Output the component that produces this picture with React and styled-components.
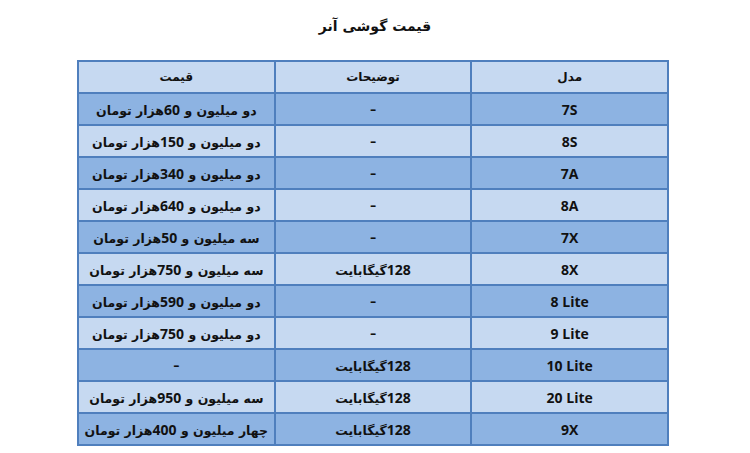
import React from "react";
import styled, { createGlobalStyle } from "styled-components";

const GlobalStyle = createGlobalStyle`
  html, body {
    margin: 0;
    padding: 0;
    background: #ffffff;
  }
  body {
    font-family: "DejaVu Sans", sans-serif;
  }
`;

const Page = styled.div`
  width: 750px;
  height: 453px;
  display: flex;
  flex-direction: column;
  align-items: center;
  direction: rtl;
`;

const Title = styled.h1`
  margin: 18px 0 0;
  height: 42px;
  font-size: 14px;
  font-weight: 700;
  color: #111;
  font-family: "DejaVu Sans", sans-serif;
`;

const Table = styled.table`
  width: 592px;
  border-collapse: collapse;
  border: 2px solid #4f7fbd;
  table-layout: fixed;
  margin-right: 4px;
`;

const Row = styled.tr`
  height: 32px;
  background: ${(p) => (p.$dark ? "#8db3e2" : "#c6d9f1")};
`;

const Cell = styled.td`
  border: 2px solid #4f7fbd;
  text-align: center;
  vertical-align: middle;
  padding: 0 4px;
  font-family: "DejaVu Sans", sans-serif;
  font-weight: 700;
  font-size: ${(p) => (p.$head ? "12px" : "12.5px")};
  color: #111;
  white-space: nowrap;
`;

const Num = styled.span`
  direction: ltr;
  unicode-bidi: isolate;
  font-family: "Open Sans", sans-serif;
  font-size: 14px;
  font-weight: 700;
`;

const rows = [
  ["7S", "–", "دو میلیون و ", "60"],
  ["8S", "–", "دو میلیون و ", "150"],
  ["7A", "–", "دو میلیون و ", "340"],
  ["8A", "–", "دو میلیون و ", "640"],
  ["7X", "–", "سه میلیون و ", "50"],
  ["8X", "128", "سه میلیون و ", "750"],
  ["8 Lite", "–", "دو میلیون و ", "590"],
  ["9 Lite", "–", "دو میلیون و ", "750"],
  ["10 Lite", "128", null, null],
  ["20 Lite", "128", "سه میلیون و ", "950"],
  ["9X", "128", "چهار میلیون و ", "400"],
];

function Desc({ value }) {
  if (value === "–") return <>–</>;
  return (
    <>
      <Num>{value}</Num>گیگابایت
    </>
  );
}

function Price({ prefix, amount }) {
  if (!prefix) return <>–</>;
  return (
    <>
      {prefix}
      <Num>{amount}</Num>هزار تومان
    </>
  );
}

export default function App() {
  return (
    <>
      <GlobalStyle />
      <Page>
        <Title>قیمت گوشی آنر</Title>
        <Table>
          <tbody>
            <Row>
              <Cell $head>مدل</Cell>
              <Cell $head>توضیحات</Cell>
              <Cell $head>قیمت</Cell>
            </Row>
            {rows.map(([model, desc, prefix, amount], i) => (
              <Row key={model} $dark={i % 2 === 0}>
                <Cell>
                  <Num>{model}</Num>
                </Cell>
                <Cell>
                  <Desc value={desc} />
                </Cell>
                <Cell>
                  <Price prefix={prefix} amount={amount} />
                </Cell>
              </Row>
            ))}
          </tbody>
        </Table>
      </Page>
    </>
  );
}
